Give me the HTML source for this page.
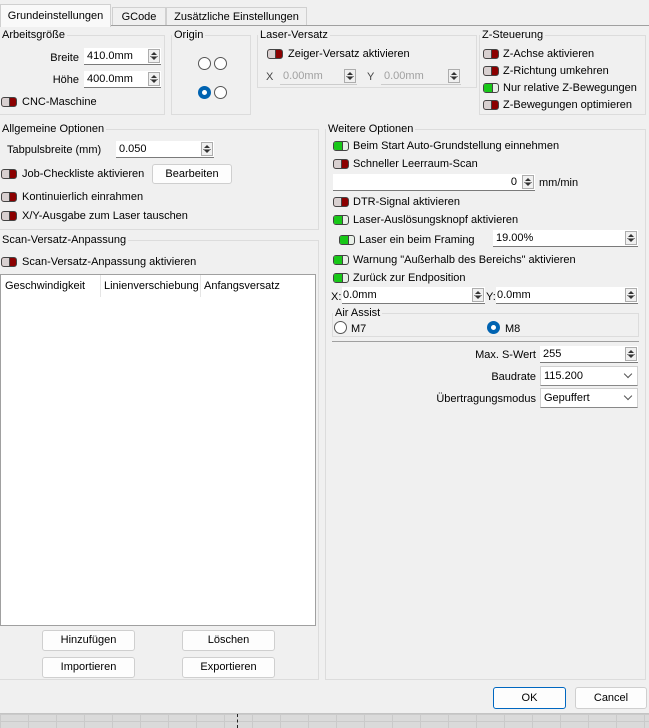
<!DOCTYPE html>
<html><head><meta charset="utf-8"><style>
*{box-sizing:border-box;margin:0;padding:0}
body{width:649px;height:728px;background:#f0f0f0;font-family:"Liberation Sans",sans-serif;font-size:11px;color:#000;position:relative;overflow:hidden}
.a{position:absolute;white-space:nowrap}
.gb{position:absolute;border:1px solid #dcdcdc}
.gt{position:absolute;background:#f0f0f0;padding:0 2px;top:-8px;left:0;line-height:14px}
.tg{position:absolute;width:16px;height:10px;border:1px solid #444;border-radius:3px;overflow:hidden}
.tg.r{background:#8b0000}.tg.r:before{content:"";position:absolute;left:0;top:0;width:7px;height:8px;background:#d8d0d0;border-right:1px solid #444}
.tg.g{background:#e8f0e8}.tg.g:before{content:"";position:absolute;left:0;top:0;width:8px;height:8px;background:#18c818;border-right:1px solid #444}
.in{position:absolute;background:#fff;border-bottom:1px solid #7a7a7a;height:17px;line-height:17px;padding-left:3px}
.sp{position:absolute;right:1px;top:1px;width:12px;height:14px;border:1px solid #adadad;background:#f0f0f0}
.sp:before{content:"";position:absolute;left:2px;top:2px;border:3px solid transparent;border-bottom:3px solid #333;border-top:0}
.sp:after{content:"";position:absolute;left:2px;bottom:2px;border:3px solid transparent;border-top:3px solid #333;border-bottom:0}
.sp i{position:absolute;left:1px;right:1px;top:6px;border-top:1px solid #888}
.dis{background:#f0f0f0;color:#a0a0a0;border-bottom-color:#ccc}
.btn{position:absolute;background:#fdfdfd;border:1px solid #cfcfcf;border-radius:3px;text-align:center;line-height:19px}
.rd{position:absolute;width:13px;height:13px;border:1px solid #555;border-radius:50%;background:#fff}
.rd.on{background:#fff;border:4px solid #0063b1}
.cb{position:absolute;right:6px;top:4px;width:6px;height:6px;border-right:1px solid #555;border-bottom:1px solid #555;transform:rotate(45deg)}
</style></head><body>
<div class="a" style="left:0;top:0;width:649px;height:26px;background:#f0f0f0"></div>
<div class="a" style="left:0;top:25px;width:649px;border-top:1px solid #a0a0a0"></div>
<div class="a" style="left:0;top:4px;width:111px;height:23px;background:#f9f9f9;border:1px solid #d0d0d0;border-bottom:none;text-align:center;line-height:23px">Grundeinstellungen</div>
<div class="a" style="left:112px;top:7px;width:54px;height:18px;background:#f0f0f0;border:1px solid #d0d0d0;border-bottom:none;text-align:center;line-height:18px">GCode</div>
<div class="a" style="left:166px;top:7px;width:141px;height:18px;background:#f0f0f0;border:1px solid #d0d0d0;border-bottom:none;text-align:center;line-height:18px">Zusätzliche Einstellungen</div>

<div class="gb" style="left:-1px;top:35px;width:166px;height:80px"><span class="gt">Arbeitsgröße</span></div>
<div class="a" style="right:570px;top:52px">Breite</div>
<div class="in" style="left:84px;top:48px;width:77px">410.0mm<span class="sp"><i></i></span></div>
<div class="a" style="right:570px;top:74px">Höhe</div>
<div class="in" style="left:84px;top:71px;width:77px">400.0mm<span class="sp"><i></i></span></div>
<div class="tg r" style="left:1px;top:97px"></div><div class="a" style="left:22px;top:96px">CNC-Maschine</div>

<div class="gb" style="left:171px;top:35px;width:80px;height:80px"><span class="gt">Origin</span></div>
<div class="rd" style="left:198px;top:57px"></div><div class="rd" style="left:214px;top:57px"></div>
<div class="rd on" style="left:198px;top:86px"></div><div class="rd" style="left:214px;top:86px"></div>

<div class="gb" style="left:257px;top:35px;width:220px;height:53px"><span class="gt">Laser-Versatz</span></div>
<div class="tg r" style="left:267px;top:49px"></div><div class="a" style="left:288px;top:48px">Zeiger-Versatz aktivieren</div>
<div class="a" style="left:266px;top:71px;color:#444">X</div>
<div class="in dis" style="left:280px;top:68px;width:77px">0.00mm<span class="sp"><i></i></span></div>
<div class="a" style="left:367px;top:71px;color:#444">Y</div>
<div class="in dis" style="left:381px;top:68px;width:80px">0.00mm<span class="sp"><i></i></span></div>

<div class="gb" style="left:479px;top:35px;width:167px;height:80px"><span class="gt">Z-Steuerung</span></div>
<div class="tg r" style="left:483px;top:49px"></div><div class="a" style="left:503px;top:48px">Z-Achse aktivieren</div>
<div class="tg r" style="left:483px;top:66px"></div><div class="a" style="left:503px;top:65px">Z-Richtung umkehren</div>
<div class="tg g" style="left:483px;top:83px"></div><div class="a" style="left:503px;top:82px">Nur relative Z-Bewegungen</div>
<div class="tg r" style="left:483px;top:100px"></div><div class="a" style="left:503px;top:99px">Z-Bewegungen optimieren</div>

<div class="gb" style="left:-1px;top:129px;width:320px;height:101px"><span class="gt">Allgemeine Optionen</span></div>
<div class="a" style="left:7px;top:144px">Tabpulsbreite (mm)</div>
<div class="in" style="left:116px;top:141px;width:98px">0.050<span class="sp"><i></i></span></div>
<div class="tg r" style="left:1px;top:169px"></div><div class="a" style="left:22px;top:168px">Job-Checkliste aktivieren</div>
<div class="btn" style="left:152px;top:164px;width:80px;height:20px">Bearbeiten</div>
<div class="tg r" style="left:1px;top:192px"></div><div class="a" style="left:22px;top:191px">Kontinuierlich einrahmen</div>
<div class="tg r" style="left:1px;top:211px"></div><div class="a" style="left:22px;top:210px">X/Y-Ausgabe zum Laser tauschen</div>

<div class="gb" style="left:-1px;top:240px;width:320px;height:440px"><span class="gt">Scan-Versatz-Anpassung</span></div>
<div class="tg r" style="left:1px;top:257px"></div><div class="a" style="left:22px;top:256px">Scan-Versatz-Anpassung aktivieren</div>
<div class="a" style="left:0;top:274px;width:316px;height:352px;background:#fff;border:1px solid #a0a0a0"></div>
<div class="a" style="left:100px;top:275px;height:22px;border-left:1px solid #e5e5e5"></div>
<div class="a" style="left:200px;top:275px;height:22px;border-left:1px solid #e5e5e5"></div>
<div class="a" style="left:5px;top:280px">Geschwindigkeit</div>
<div class="a" style="left:104px;top:280px">Linienverschiebung</div>
<div class="a" style="left:204px;top:280px">Anfangsversatz</div>
<div class="btn" style="left:42px;top:630px;width:93px;height:21px">Hinzufügen</div>
<div class="btn" style="left:182px;top:630px;width:93px;height:21px">Löschen</div>
<div class="btn" style="left:42px;top:657px;width:93px;height:21px">Importieren</div>
<div class="btn" style="left:182px;top:657px;width:93px;height:21px">Exportieren</div>

<div class="gb" style="left:325px;top:129px;width:321px;height:551px"><span class="gt">Weitere Optionen</span></div>
<div class="tg g" style="left:333px;top:141px"></div><div class="a" style="left:353px;top:140px">Beim Start Auto-Grundstellung einnehmen</div>
<div class="tg r" style="left:333px;top:159px"></div><div class="a" style="left:353px;top:158px">Schneller Leerraum-Scan</div>
<div class="in" style="left:333px;top:174px;width:202px;text-align:right;padding-right:18px">0<span class="sp"><i></i></span></div>
<div class="a" style="left:539px;top:177px">mm/min</div>
<div class="tg r" style="left:333px;top:197px"></div><div class="a" style="left:353px;top:196px">DTR-Signal aktivieren</div>
<div class="tg g" style="left:333px;top:215px"></div><div class="a" style="left:353px;top:214px">Laser-Auslösungsknopf aktivieren</div>
<div class="tg g" style="left:339px;top:235px"></div><div class="a" style="left:359px;top:234px">Laser ein beim Framing</div>
<div class="in" style="left:493px;top:230px;width:145px">19.00%<span class="sp"><i></i></span></div>
<div class="tg g" style="left:333px;top:255px"></div><div class="a" style="left:353px;top:254px">Warnung "Außerhalb des Bereichs" aktivieren</div>
<div class="tg g" style="left:333px;top:273px"></div><div class="a" style="left:353px;top:272px">Zurück zur Endposition</div>
<div class="a" style="left:331px;top:291px">X:</div>
<div class="in" style="left:342px;top:287px;width:143px;padding-left:1px">0.0mm<span class="sp"><i></i></span></div>
<div class="a" style="left:486px;top:291px">Y:</div>
<div class="in" style="left:496px;top:287px;width:142px;padding-left:1px">0.0mm<span class="sp"><i></i></span></div>
<div class="gb" style="left:332px;top:313px;width:307px;height:24px"><span class="gt">Air Assist</span></div>
<div class="rd" style="left:334px;top:321px"></div><div class="a" style="left:351px;top:323px">M7</div>
<div class="rd on" style="left:487px;top:321px"></div><div class="a" style="left:505px;top:323px">M8</div>
<div class="a" style="left:332px;top:341px;width:307px;border-top:1px solid #a0a0a0"></div>
<div class="a" style="right:113px;top:349px">Max. S-Wert</div>
<div class="in" style="left:540px;top:346px;width:98px">255<span class="sp"><i></i></span></div>
<div class="a" style="right:113px;top:371px">Baudrate</div>
<div class="in" style="left:540px;top:366px;width:98px;height:20px;line-height:19px;border:1px solid #d0d0d0;border-bottom-color:#888">115.200<span class="cb"></span></div>
<div class="a" style="right:113px;top:393px">Übertragungsmodus</div>
<div class="in" style="left:540px;top:388px;width:98px;height:20px;line-height:19px;border:1px solid #d0d0d0;border-bottom-color:#888">Gepuffert<span class="cb"></span></div>

<div class="btn" style="left:493px;top:687px;width:73px;height:22px;line-height:21px;border:1px solid #0067c0">OK</div>
<div class="btn" style="left:575px;top:687px;width:72px;height:22px;line-height:21px">Cancel</div>
<div class="a" style="left:0;top:713px;width:649px;height:15px;background:#dadada;border-top:1px solid #c4c4c4;background-image:linear-gradient(90deg,#cacaca 1px,transparent 1px),linear-gradient(#cacaca 1px,transparent 1px);background-size:28px 7px"></div>
<div class="a" style="left:237px;top:714px;height:14px;border-left:1px dashed #222"></div>
</body></html>
